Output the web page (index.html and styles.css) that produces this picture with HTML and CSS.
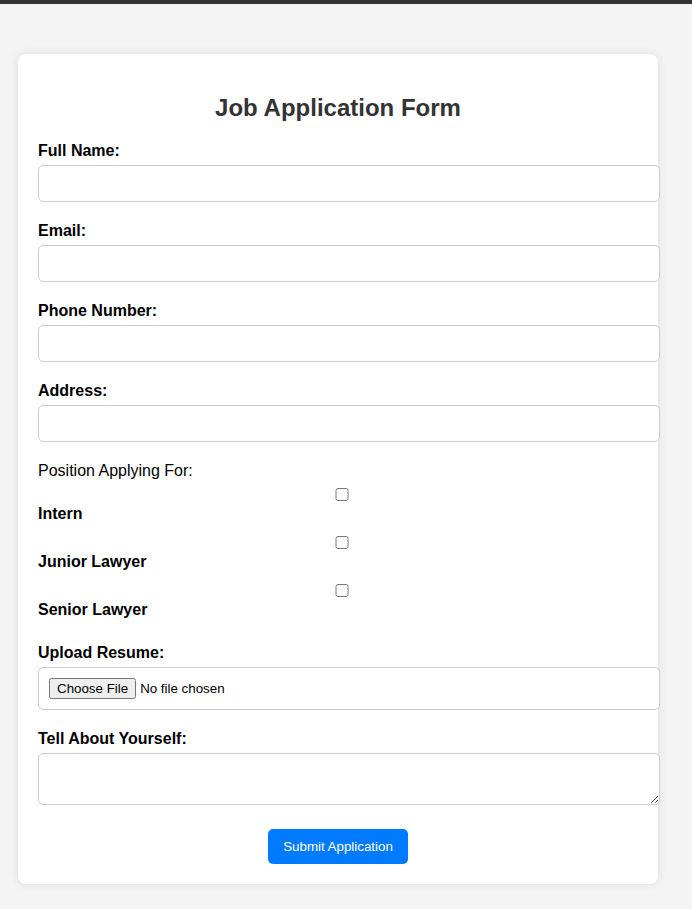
FILE: index.html
```html
<!DOCTYPE html>
<html lang="en">
<head>
<meta charset="utf-8">
<title>Job Application Form</title>
<link rel="stylesheet" href="styles.css">
</head>
<body>
<div class="topbar"></div>
<div class="card">
  <h2 class="title">Job Application Form</h2>
  <form class="form">
    <label class="field-label" for="name">Full Name:</label>
    <input class="text-input" type="text" id="name">

    <label class="field-label" for="email">Email:</label>
    <input class="text-input" type="email" id="email">

    <label class="field-label" for="phone">Phone Number:</label>
    <input class="text-input" type="tel" id="phone">

    <label class="field-label" for="address">Address:</label>
    <input class="text-input" type="text" id="address">

    <div class="group">
      <p class="group-title">Position Applying For:</p>
      <input class="check" type="checkbox" id="intern">
      <label class="field-label" for="intern">Intern</label>
      <input class="check" type="checkbox" id="junior">
      <label class="field-label" for="junior">Junior Lawyer</label>
      <input class="check" type="checkbox" id="senior">
      <label class="field-label" for="senior">Senior Lawyer</label>
    </div>

    <label class="field-label" for="resume">Upload Resume:</label>
    <input class="text-input file-input" type="file" id="resume">

    <label class="field-label" for="about">Tell About Yourself:</label>
    <textarea class="text-input area" id="about"></textarea>

    <div class="actions">
      <button class="submit" type="submit">Submit Application</button>
    </div>
  </form>
</div>
</body>
</html>
```

FILE: styles.css
```css
html, body {
  margin: 0;
  padding: 0;
}

body {
  background: #f4f4f4;
  font-family: "Liberation Sans", Arial, sans-serif;
  font-size: 16px;
  color: #000;
}

.topbar {
  height: 4px;
  background: #333;
}

.card {
  width: 600px;
  margin: 50px 34px 25px 18px;
  padding: 20px;
  background: #fff;
  border-radius: 8px;
  box-shadow: 0 0 10px rgba(0, 0, 0, 0.1);
}

.title {
  margin: 19.92px 0;
  font-size: 24px;
  font-weight: bold;
  text-align: center;
  color: #333;
}

.form {
  margin: 0;
}

.field-label {
  display: block;
  margin-bottom: 5px;
  font-weight: bold;
}

.text-input {
  display: block;
  width: 100%;
  margin: 0 0 20px;
  padding: 10px;
  border: 1px solid #ccc;
  border-radius: 5px;
  font-family: "Liberation Sans", Arial, sans-serif;
  font-size: 13.333px;
  background: #fff;
}

.area {
  font-family: "Liberation Mono", monospace;
}

.group {
  margin-bottom: 25px;
}

.group-title {
  margin: 0;
}

.check {
  display: block;
  width: 600px;
  height: 13px;
  margin: 13px 0 4px 4px;
  padding: 0;
}

.group-title + .check {
  margin-top: 8px;
}

.actions {
  padding-top: 4px;
  text-align: center;
}

.submit {
  padding: 10px 15px;
  border: none;
  border-radius: 5px;
  background: #007bff;
  color: #fff;
  font-family: "Liberation Sans", Arial, sans-serif;
  font-size: 13.333px;
  cursor: pointer;
}
```
